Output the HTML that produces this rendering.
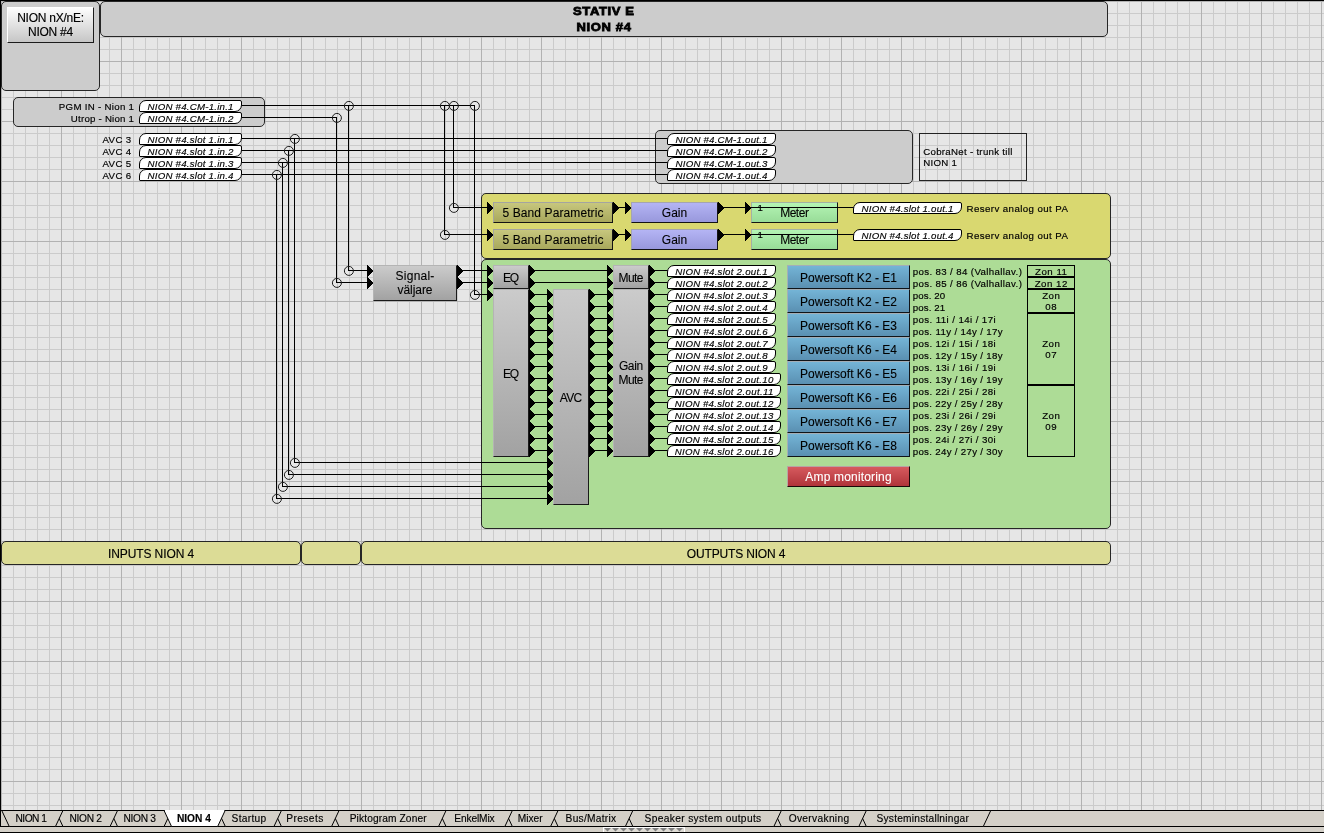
<!DOCTYPE html>
<html><head><meta charset="utf-8"><title>NION 4</title>
<style>
html,body{margin:0;padding:0;}
body{width:1324px;height:833px;position:relative;overflow:hidden;background:#e6e6e6;font-family:"Liberation Sans",sans-serif;color:#000;}
#grid{position:absolute;left:0;top:0;width:1324px;height:833px;
background-image:
 linear-gradient(to right,#b2b2b2 1px,transparent 1px),
 linear-gradient(to bottom,#b2b2b2 1px,transparent 1px),
 linear-gradient(to right,#cbcbcb 1px,transparent 1px),
 linear-gradient(to bottom,#cbcbcb 1px,transparent 1px);
background-size:60px 60px,60px 60px,12px 12px,12px 12px;
background-position:1px 1px;}
#all{position:absolute;left:0;top:0;width:1324px;height:833px;will-change:transform;}
div{box-sizing:border-box;}
.pan{position:absolute;border:1px solid #262626;border-radius:5px;}
.gray{background:#cccccc;}
.yel{background:#d9d870;}
.grn{background:#addc96;}
.kha{background:#dcdc96;text-align:center;font-size:12px;line-height:22px;white-space:nowrap;padding-top:1px;-webkit-text-stroke:0.15px #000;}
.box{position:absolute;border:1px solid #222;}
.hdr{position:absolute;text-align:center;font-weight:bold;font-size:11.3px;line-height:16.2px;padding-top:1.8px;-webkit-text-stroke:0.8px #000;white-space:nowrap;}
.btn{position:absolute;border:1px solid;border-color:#fff #1c1c1c #1c1c1c #fff;background:linear-gradient(#fdfdfd,#c6c6c6);text-align:center;font-size:12px;line-height:14px;padding-top:2.6px;letter-spacing:-0.25px;-webkit-text-stroke:0.15px #000;}
svg{position:absolute;left:0;top:0;}
svg .cs circle{fill:none;stroke:#1c1c1c;stroke-width:1;}
.blk{position:absolute;border:1px solid;text-align:center;font-size:12px;display:flex;align-items:center;justify-content:center;line-height:14px;white-space:nowrap;-webkit-text-stroke:0.1px;}
.gry{background:linear-gradient(#cbcbcb,#a2a2a2);border-color:#b4b4b4 #1a1a1a #1a1a1a #b4b4b4;}
.olv{background:linear-gradient(#c7c77e,#a8a85c);border-color:#a4a4a0 #141414 #141414 #a4a4a0;}
.lav{background:linear-gradient(#b4b4f4,#9898dc);border-color:#a4a4b0 #141414 #141414 #a4a4b0;}
.mtr{background:linear-gradient(#b4f4b4,#98dc98);border-color:#a4b0a4 #141414 #141414 #a4b0a4;}
.pws{background:linear-gradient(#74b4d6,#5a90b2);border-color:#a4aeb6 #101418 #101418 #a4aeb6;}
.red{background:linear-gradient(#d65a5e,#b0343a);border-color:#b8a4a4 #180808 #180808 #b8a4a4;color:#fff;}
.pill{position:absolute;background:#fff;border:1px solid #000;border-radius:7px 2px 7px 1px;font-style:italic;font-size:9.7px;line-height:11.3px;white-space:nowrap;text-align:center;-webkit-text-stroke:0.15px #000;}
.t{position:absolute;white-space:nowrap;}
.lb{font-size:9.7px;line-height:12px;-webkit-text-stroke:0.17px #000;}
.zon{position:absolute;border:1px solid #000;text-align:center;font-size:9.7px;line-height:11px;display:flex;align-items:center;justify-content:center;-webkit-text-stroke:0.17px #000;}
#tabbar{position:absolute;left:0;top:810px;width:1324px;height:23px;background:#d4d0c8;}
.tab{position:absolute;top:811px;height:15px;font-size:10.2px;line-height:15px;white-space:nowrap;-webkit-text-stroke:0.15px #000;}
.act{font-weight:bold;}
</style></head><body>
<div id="all">
<div id="grid"></div>
<div class="pan gray" style="left:1px;top:1px;width:99px;height:90px;"></div>
<div class="pan gray" style="left:100px;top:1px;width:1008px;height:36px;"></div>
<div class="pan gray" style="left:13px;top:97px;width:252px;height:30px;"></div>
<div class="pan gray" style="left:655px;top:130px;width:258px;height:54px;"></div>
<div class="box" style="left:919px;top:133px;width:108px;height:48px;"></div>
<div class="pan yel" style="left:481px;top:193px;width:630px;height:66px;"></div>
<div class="pan grn" style="left:481px;top:259px;width:630px;height:270px;"></div>
<div class="pan kha" style="left:1px;top:541px;width:300px;height:24px;"><span style="letter-spacing:-0.104px">INPUTS NION 4</span></div>
<div class="pan kha" style="left:301px;top:541px;width:60px;height:24px;"></div>
<div class="pan kha" style="left:361px;top:541px;width:750px;height:24px;"><span style="letter-spacing:-0.167px">OUTPUTS NION 4</span></div>
<svg width="1324" height="833" viewBox="0 0 1324 833" shape-rendering="crispEdges">
<rect x="242" y="105" width="233" height="1" fill="#000"/>
<rect x="242" y="117" width="95" height="1" fill="#000"/>
<rect x="242" y="138" width="426" height="1" fill="#000"/>
<rect x="294" y="138" width="1" height="325" fill="#000"/>
<rect x="294" y="462" width="254" height="1" fill="#000"/>
<polygon points="547,457 553,463 547,469"/>
<rect x="242" y="150" width="426" height="1" fill="#000"/>
<rect x="288" y="150" width="1" height="325" fill="#000"/>
<rect x="288" y="474" width="260" height="1" fill="#000"/>
<polygon points="547,469 553,475 547,481"/>
<rect x="242" y="162" width="426" height="1" fill="#000"/>
<rect x="282" y="162" width="1" height="325" fill="#000"/>
<rect x="282" y="486" width="266" height="1" fill="#000"/>
<polygon points="547,481 553,487 547,493"/>
<rect x="242" y="174" width="426" height="1" fill="#000"/>
<rect x="276" y="174" width="1" height="325" fill="#000"/>
<rect x="276" y="498" width="272" height="1" fill="#000"/>
<polygon points="547,493 553,499 547,505"/>
<rect x="348" y="105" width="1" height="166" fill="#000"/>
<rect x="348" y="270" width="20" height="1" fill="#000"/>
<rect x="336" y="117" width="1" height="166" fill="#000"/>
<rect x="336" y="282" width="32" height="1" fill="#000"/>
<rect x="444" y="105" width="1" height="130" fill="#000"/>
<rect x="444" y="234" width="44" height="1" fill="#000"/>
<rect x="453" y="105" width="1" height="103" fill="#000"/>
<rect x="453" y="207" width="35" height="1" fill="#000"/>
<rect x="474" y="105" width="1" height="190" fill="#000"/>
<rect x="474" y="294" width="14" height="1" fill="#000"/>
<polygon points="367,265 373,271 367,277"/>
<polygon points="457,265 463,271 457,277"/>
<rect x="463" y="270" width="25" height="1" fill="#000"/>
<polygon points="367,277 373,283 367,289"/>
<polygon points="457,277 463,283 457,289"/>
<rect x="463" y="282" width="25" height="1" fill="#000"/>
<polygon points="487,202 493,208 487,214"/>
<polygon points="613,202 619,208 613,214"/>
<rect x="619" y="207" width="7" height="1" fill="#000"/>
<polygon points="625,202 631,208 625,214"/>
<polygon points="718,202 724,208 718,214"/>
<rect x="724" y="207" width="22" height="1" fill="#000"/>
<polygon points="745,202 751,208 745,214"/>
<rect x="838" y="207" width="16" height="1" fill="#000"/>
<polygon points="487,229 493,235 487,241"/>
<polygon points="613,229 619,235 613,241"/>
<rect x="619" y="234" width="7" height="1" fill="#000"/>
<polygon points="625,229 631,235 625,241"/>
<polygon points="718,229 724,235 718,241"/>
<rect x="724" y="234" width="22" height="1" fill="#000"/>
<polygon points="745,229 751,235 745,241"/>
<rect x="838" y="234" width="16" height="1" fill="#000"/>
<polygon points="487,265 493,271 487,277"/>
<polygon points="487,277 493,283 487,289"/>
<polygon points="487,289 493,295 487,301"/>
<polygon points="529,265 535,271 529,277"/>
<rect x="535" y="270" width="73" height="1" fill="#000"/>
<polygon points="607,265 613,271 607,277"/>
<polygon points="529,277 535,283 529,289"/>
<rect x="535" y="282" width="73" height="1" fill="#000"/>
<polygon points="607,277 613,283 607,289"/>
<polygon points="529,289 535,295 529,301"/>
<rect x="535" y="294" width="13" height="1" fill="#000"/>
<polygon points="547,289 553,295 547,301"/>
<polygon points="589,289 595,295 589,301"/>
<rect x="595" y="294" width="13" height="1" fill="#000"/>
<polygon points="607,289 613,295 607,301"/>
<polygon points="529,301 535,307 529,313"/>
<rect x="535" y="306" width="13" height="1" fill="#000"/>
<polygon points="547,301 553,307 547,313"/>
<polygon points="589,301 595,307 589,313"/>
<rect x="595" y="306" width="13" height="1" fill="#000"/>
<polygon points="607,301 613,307 607,313"/>
<polygon points="529,313 535,319 529,325"/>
<rect x="535" y="318" width="13" height="1" fill="#000"/>
<polygon points="547,313 553,319 547,325"/>
<polygon points="589,313 595,319 589,325"/>
<rect x="595" y="318" width="13" height="1" fill="#000"/>
<polygon points="607,313 613,319 607,325"/>
<polygon points="529,325 535,331 529,337"/>
<rect x="535" y="330" width="13" height="1" fill="#000"/>
<polygon points="547,325 553,331 547,337"/>
<polygon points="589,325 595,331 589,337"/>
<rect x="595" y="330" width="13" height="1" fill="#000"/>
<polygon points="607,325 613,331 607,337"/>
<polygon points="529,337 535,343 529,349"/>
<rect x="535" y="342" width="13" height="1" fill="#000"/>
<polygon points="547,337 553,343 547,349"/>
<polygon points="589,337 595,343 589,349"/>
<rect x="595" y="342" width="13" height="1" fill="#000"/>
<polygon points="607,337 613,343 607,349"/>
<polygon points="529,349 535,355 529,361"/>
<rect x="535" y="354" width="13" height="1" fill="#000"/>
<polygon points="547,349 553,355 547,361"/>
<polygon points="589,349 595,355 589,361"/>
<rect x="595" y="354" width="13" height="1" fill="#000"/>
<polygon points="607,349 613,355 607,361"/>
<polygon points="529,361 535,367 529,373"/>
<rect x="535" y="366" width="13" height="1" fill="#000"/>
<polygon points="547,361 553,367 547,373"/>
<polygon points="589,361 595,367 589,373"/>
<rect x="595" y="366" width="13" height="1" fill="#000"/>
<polygon points="607,361 613,367 607,373"/>
<polygon points="529,373 535,379 529,385"/>
<rect x="535" y="378" width="13" height="1" fill="#000"/>
<polygon points="547,373 553,379 547,385"/>
<polygon points="589,373 595,379 589,385"/>
<rect x="595" y="378" width="13" height="1" fill="#000"/>
<polygon points="607,373 613,379 607,385"/>
<polygon points="529,385 535,391 529,397"/>
<rect x="535" y="390" width="13" height="1" fill="#000"/>
<polygon points="547,385 553,391 547,397"/>
<polygon points="589,385 595,391 589,397"/>
<rect x="595" y="390" width="13" height="1" fill="#000"/>
<polygon points="607,385 613,391 607,397"/>
<polygon points="529,397 535,403 529,409"/>
<rect x="535" y="402" width="13" height="1" fill="#000"/>
<polygon points="547,397 553,403 547,409"/>
<polygon points="589,397 595,403 589,409"/>
<rect x="595" y="402" width="13" height="1" fill="#000"/>
<polygon points="607,397 613,403 607,409"/>
<polygon points="529,409 535,415 529,421"/>
<rect x="535" y="414" width="13" height="1" fill="#000"/>
<polygon points="547,409 553,415 547,421"/>
<polygon points="589,409 595,415 589,421"/>
<rect x="595" y="414" width="13" height="1" fill="#000"/>
<polygon points="607,409 613,415 607,421"/>
<polygon points="529,421 535,427 529,433"/>
<rect x="535" y="426" width="13" height="1" fill="#000"/>
<polygon points="547,421 553,427 547,433"/>
<polygon points="589,421 595,427 589,433"/>
<rect x="595" y="426" width="13" height="1" fill="#000"/>
<polygon points="607,421 613,427 607,433"/>
<polygon points="529,433 535,439 529,445"/>
<rect x="535" y="438" width="13" height="1" fill="#000"/>
<polygon points="547,433 553,439 547,445"/>
<polygon points="589,433 595,439 589,445"/>
<rect x="595" y="438" width="13" height="1" fill="#000"/>
<polygon points="607,433 613,439 607,445"/>
<polygon points="529,445 535,451 529,457"/>
<rect x="535" y="450" width="13" height="1" fill="#000"/>
<polygon points="547,445 553,451 547,457"/>
<polygon points="589,445 595,451 589,457"/>
<rect x="595" y="450" width="13" height="1" fill="#000"/>
<polygon points="607,445 613,451 607,457"/>
<polygon points="649,265 655,271 649,277"/>
<rect x="655" y="270" width="13" height="1" fill="#000"/>
<polygon points="649,277 655,283 649,289"/>
<rect x="655" y="282" width="13" height="1" fill="#000"/>
<polygon points="649,289 655,295 649,301"/>
<rect x="655" y="294" width="13" height="1" fill="#000"/>
<polygon points="649,301 655,307 649,313"/>
<rect x="655" y="306" width="13" height="1" fill="#000"/>
<polygon points="649,313 655,319 649,325"/>
<rect x="655" y="318" width="13" height="1" fill="#000"/>
<polygon points="649,325 655,331 649,337"/>
<rect x="655" y="330" width="13" height="1" fill="#000"/>
<polygon points="649,337 655,343 649,349"/>
<rect x="655" y="342" width="13" height="1" fill="#000"/>
<polygon points="649,349 655,355 649,361"/>
<rect x="655" y="354" width="13" height="1" fill="#000"/>
<polygon points="649,361 655,367 649,373"/>
<rect x="655" y="366" width="13" height="1" fill="#000"/>
<polygon points="649,373 655,379 649,385"/>
<rect x="655" y="378" width="13" height="1" fill="#000"/>
<polygon points="649,385 655,391 649,397"/>
<rect x="655" y="390" width="13" height="1" fill="#000"/>
<polygon points="649,397 655,403 649,409"/>
<rect x="655" y="402" width="13" height="1" fill="#000"/>
<polygon points="649,409 655,415 649,421"/>
<rect x="655" y="414" width="13" height="1" fill="#000"/>
<polygon points="649,421 655,427 649,433"/>
<rect x="655" y="426" width="13" height="1" fill="#000"/>
<polygon points="649,433 655,439 649,445"/>
<rect x="655" y="438" width="13" height="1" fill="#000"/>
<polygon points="649,445 655,451 649,457"/>
<rect x="655" y="450" width="13" height="1" fill="#000"/>
<g class="cs" shape-rendering="geometricPrecision">
<circle cx="294.9" cy="138.9" r="4.5"/>
<circle cx="294.9" cy="462.9" r="4.5"/>
<circle cx="288.9" cy="150.9" r="4.5"/>
<circle cx="288.9" cy="474.9" r="4.5"/>
<circle cx="282.9" cy="162.9" r="4.5"/>
<circle cx="282.9" cy="486.9" r="4.5"/>
<circle cx="276.9" cy="174.9" r="4.5"/>
<circle cx="276.9" cy="498.9" r="4.5"/>
<circle cx="348.9" cy="105.9" r="4.5"/>
<circle cx="348.9" cy="270.9" r="4.5"/>
<circle cx="336.9" cy="117.9" r="4.5"/>
<circle cx="336.9" cy="282.9" r="4.5"/>
<circle cx="444.9" cy="105.9" r="4.5"/>
<circle cx="444.9" cy="234.9" r="4.5"/>
<circle cx="453.9" cy="105.9" r="4.5"/>
<circle cx="453.9" cy="207.9" r="4.5"/>
<circle cx="474.9" cy="105.9" r="4.5"/>
<circle cx="474.9" cy="294.9" r="4.5"/>
</g>
</svg>
<div class="hdr" style="left:100px;top:1px;width:1008px;"><span style="display:inline-block;transform:scaleX(1.15);letter-spacing:0.552px;margin-right:-0.552px">STATIV E</span><br><span style="display:inline-block;transform:scaleX(1.15);letter-spacing:0.572px;margin-right:-0.572px">NION #4</span></div>
<div class="btn" style="left:7px;top:7px;width:87px;height:36px;">NION nX/nE:<br>NION #4</div>
<div class="blk olv" style="left:493px;top:202px;width:120px;height:21px;"><div style="position:relative;top:0.3px"><span style="letter-spacing:0.101px;margin-right:-0.101px">5 Band Parametric</span></div></div>
<div class="blk lav" style="left:631px;top:202px;width:87px;height:21px;"><div style="position:relative;top:0.3px"><span style="letter-spacing:-0.016px;margin-right:0.016px">Gain</span></div></div>
<div class="blk mtr" style="left:751px;top:202px;width:87px;height:21px;"><div style="position:relative;top:0.3px"><span style="letter-spacing:-0.481px;margin-right:0.481px">Meter</span></div></div>
<div class="t" style="left:757.5px;top:201.6px;font-size:9.6px;line-height:11px;-webkit-text-stroke:0.2px #000;">1</div>
<div style="position:absolute;left:751px;top:207px;width:88px;height:1px;background:#000"></div>
<div class="blk olv" style="left:493px;top:229px;width:120px;height:21px;"><div style="position:relative;top:0.3px"><span style="letter-spacing:0.101px;margin-right:-0.101px">5 Band Parametric</span></div></div>
<div class="blk lav" style="left:631px;top:229px;width:87px;height:21px;"><div style="position:relative;top:0.3px"><span style="letter-spacing:-0.016px;margin-right:0.016px">Gain</span></div></div>
<div class="blk mtr" style="left:751px;top:229px;width:87px;height:21px;"><div style="position:relative;top:0.3px"><span style="letter-spacing:-0.481px;margin-right:0.481px">Meter</span></div></div>
<div class="t" style="left:757.5px;top:228.6px;font-size:9.6px;line-height:11px;-webkit-text-stroke:0.2px #000;">1</div>
<div style="position:absolute;left:751px;top:234px;width:88px;height:1px;background:#000"></div>
<div class="blk gry" style="left:373px;top:265px;width:84px;height:36px;"><div style="position:relative;top:-0.4px"><span style="letter-spacing:0.233px;margin-right:-0.233px">Signal-</span><br><span style="letter-spacing:-0.058px;margin-right:0.058px">väljare</span></div></div>
<div class="blk gry" style="left:493px;top:265px;width:36px;height:24px;"><div style="position:relative;top:0.6px"><span style="letter-spacing:-1.338px;margin-right:1.338px">EQ</span></div></div>
<div class="blk gry" style="left:493px;top:289px;width:36px;height:168px;"><div style="position:relative;top:0.6px"><span style="letter-spacing:-1.338px;margin-right:1.338px">EQ</span></div></div>
<div class="blk gry" style="left:553px;top:289px;width:36px;height:216px;"><div style="position:relative;top:0.6px"><span style="letter-spacing:-0.642px;margin-right:0.642px">AVC</span></div></div>
<div class="blk gry" style="left:613px;top:265px;width:36px;height:24px;"><div style="position:relative;top:0.6px"><span style="letter-spacing:-0.559px;margin-right:0.559px">Mute</span></div></div>
<div class="blk gry" style="left:613px;top:289px;width:36px;height:168px;"><div style="position:relative;top:-0.4px"><span style="letter-spacing:-0.366px;margin-right:0.366px">Gain</span><br><span style="letter-spacing:-0.559px;margin-right:0.559px">Mute</span></div></div>
<div class="blk pws" style="left:787px;top:265px;width:123px;height:24px;"><div style="position:relative;top:0.6px"><span style="letter-spacing:0.018px;margin-right:-0.018px">Powersoft K2 - E1</span></div></div>
<div class="blk pws" style="left:787px;top:289px;width:123px;height:24px;"><div style="position:relative;top:0.6px"><span style="letter-spacing:0.018px;margin-right:-0.018px">Powersoft K2 - E2</span></div></div>
<div class="blk pws" style="left:787px;top:313px;width:123px;height:24px;"><div style="position:relative;top:0.6px"><span style="letter-spacing:0.018px;margin-right:-0.018px">Powersoft K6 - E3</span></div></div>
<div class="blk pws" style="left:787px;top:337px;width:123px;height:24px;"><div style="position:relative;top:0.6px"><span style="letter-spacing:0.018px;margin-right:-0.018px">Powersoft K6 - E4</span></div></div>
<div class="blk pws" style="left:787px;top:361px;width:123px;height:24px;"><div style="position:relative;top:0.6px"><span style="letter-spacing:0.018px;margin-right:-0.018px">Powersoft K6 - E5</span></div></div>
<div class="blk pws" style="left:787px;top:385px;width:123px;height:24px;"><div style="position:relative;top:0.6px"><span style="letter-spacing:0.018px;margin-right:-0.018px">Powersoft K6 - E6</span></div></div>
<div class="blk pws" style="left:787px;top:409px;width:123px;height:24px;"><div style="position:relative;top:0.6px"><span style="letter-spacing:0.018px;margin-right:-0.018px">Powersoft K6 - E7</span></div></div>
<div class="blk pws" style="left:787px;top:433px;width:123px;height:24px;"><div style="position:relative;top:0.6px"><span style="letter-spacing:0.018px;margin-right:-0.018px">Powersoft K6 - E8</span></div></div>
<div class="blk red" style="left:787px;top:466px;width:123px;height:21px;"><div style="position:relative;top:0.3px"><span style="letter-spacing:0.17px;margin-right:-0.17px">Amp monitoring</span></div></div>
<div class="pill" style="left:139px;top:100px;width:103px;height:12px;"><span style="letter-spacing:0.22px;margin-right:-0.22px">NION #4.CM-1.in.1</span></div>
<div class="pill" style="left:139px;top:112px;width:103px;height:12px;"><span style="letter-spacing:0.22px;margin-right:-0.22px">NION #4.CM-1.in.2</span></div>
<div class="pill" style="left:139px;top:133px;width:103px;height:12px;"><span style="letter-spacing:0.225px;margin-right:-0.225px">NION #4.slot 1.in.1</span></div>
<div class="pill" style="left:667px;top:133px;width:109px;height:12px;"><span style="letter-spacing:0.211px;margin-right:-0.211px">NION #4.CM-1.out.1</span></div>
<div class="pill" style="left:139px;top:145px;width:103px;height:12px;"><span style="letter-spacing:0.225px;margin-right:-0.225px">NION #4.slot 1.in.2</span></div>
<div class="pill" style="left:667px;top:145px;width:109px;height:12px;"><span style="letter-spacing:0.211px;margin-right:-0.211px">NION #4.CM-1.out.2</span></div>
<div class="pill" style="left:139px;top:157px;width:103px;height:12px;"><span style="letter-spacing:0.225px;margin-right:-0.225px">NION #4.slot 1.in.3</span></div>
<div class="pill" style="left:667px;top:157px;width:109px;height:12px;"><span style="letter-spacing:0.211px;margin-right:-0.211px">NION #4.CM-1.out.3</span></div>
<div class="pill" style="left:139px;top:169px;width:103px;height:12px;"><span style="letter-spacing:0.225px;margin-right:-0.225px">NION #4.slot 1.in.4</span></div>
<div class="pill" style="left:667px;top:169px;width:109px;height:12px;"><span style="letter-spacing:0.211px;margin-right:-0.211px">NION #4.CM-1.out.4</span></div>
<div class="pill" style="left:853px;top:202px;width:109px;height:12px;"><span style="letter-spacing:0.217px;margin-right:-0.217px">NION #4.slot 1.out.1</span></div>
<div class="pill" style="left:853px;top:229px;width:109px;height:12px;"><span style="letter-spacing:0.217px;margin-right:-0.217px">NION #4.slot 1.out.4</span></div>
<div class="pill" style="left:667px;top:265px;width:109px;height:12px;"><span style="letter-spacing:0.243px;margin-right:-0.243px">NION #4.slot 2.out.1</span></div>
<div class="pill" style="left:667px;top:277px;width:109px;height:12px;"><span style="letter-spacing:0.243px;margin-right:-0.243px">NION #4.slot 2.out.2</span></div>
<div class="pill" style="left:667px;top:289px;width:109px;height:12px;"><span style="letter-spacing:0.243px;margin-right:-0.243px">NION #4.slot 2.out.3</span></div>
<div class="pill" style="left:667px;top:301px;width:109px;height:12px;"><span style="letter-spacing:0.243px;margin-right:-0.243px">NION #4.slot 2.out.4</span></div>
<div class="pill" style="left:667px;top:313px;width:109px;height:12px;"><span style="letter-spacing:0.243px;margin-right:-0.243px">NION #4.slot 2.out.5</span></div>
<div class="pill" style="left:667px;top:325px;width:109px;height:12px;"><span style="letter-spacing:0.243px;margin-right:-0.243px">NION #4.slot 2.out.6</span></div>
<div class="pill" style="left:667px;top:337px;width:109px;height:12px;"><span style="letter-spacing:0.243px;margin-right:-0.243px">NION #4.slot 2.out.7</span></div>
<div class="pill" style="left:667px;top:349px;width:109px;height:12px;"><span style="letter-spacing:0.243px;margin-right:-0.243px">NION #4.slot 2.out.8</span></div>
<div class="pill" style="left:667px;top:361px;width:109px;height:12px;"><span style="letter-spacing:0.243px;margin-right:-0.243px">NION #4.slot 2.out.9</span></div>
<div class="pill" style="left:667px;top:373px;width:114px;height:12px;"><span style="letter-spacing:0.274px;margin-right:-0.274px">NION #4.slot 2.out.10</span></div>
<div class="pill" style="left:667px;top:385px;width:114px;height:12px;"><span style="letter-spacing:0.31px;margin-right:-0.31px">NION #4.slot 2.out.11</span></div>
<div class="pill" style="left:667px;top:397px;width:114px;height:12px;"><span style="letter-spacing:0.274px;margin-right:-0.274px">NION #4.slot 2.out.12</span></div>
<div class="pill" style="left:667px;top:409px;width:114px;height:12px;"><span style="letter-spacing:0.274px;margin-right:-0.274px">NION #4.slot 2.out.13</span></div>
<div class="pill" style="left:667px;top:421px;width:114px;height:12px;"><span style="letter-spacing:0.274px;margin-right:-0.274px">NION #4.slot 2.out.14</span></div>
<div class="pill" style="left:667px;top:433px;width:114px;height:12px;"><span style="letter-spacing:0.274px;margin-right:-0.274px">NION #4.slot 2.out.15</span></div>
<div class="pill" style="left:667px;top:445px;width:114px;height:12px;"><span style="letter-spacing:0.274px;margin-right:-0.274px">NION #4.slot 2.out.16</span></div>
<div class="t lb" style="right:1190px;top:100.5px;letter-spacing:0.293px;margin-right:-0.293px">PGM IN - Nion 1</div>
<div class="t lb" style="right:1190px;top:112.5px;letter-spacing:0.221px;margin-right:-0.221px">Utrop - Nion 1</div>
<div class="t lb" style="left:102.5px;top:133.5px;letter-spacing:0.359px;">AVC 3</div>
<div class="t lb" style="left:102.5px;top:145.5px;letter-spacing:0.359px;">AVC 4</div>
<div class="t lb" style="left:102.5px;top:157.5px;letter-spacing:0.359px;">AVC 5</div>
<div class="t lb" style="left:102.5px;top:169.5px;letter-spacing:0.359px;">AVC 6</div>
<div class="t lb" style="left:966.5px;top:202.5px;letter-spacing:0.414px;">Reserv analog out PA</div>
<div class="t lb" style="left:966.5px;top:229.5px;letter-spacing:0.414px;">Reserv analog out PA</div>
<div class="t lb" style="left:923.2px;top:145.5px;letter-spacing:0.285px;line-height:11px;">CobraNet - trunk till<br>NION 1</div>
<div class="t lb" style="left:912.7px;top:265.5px;letter-spacing:0.368px;">pos. 83 / 84 (Valhallav.)</div>
<div class="t lb" style="left:912.7px;top:277.5px;letter-spacing:0.368px;">pos. 85 / 86 (Valhallav.)</div>
<div class="t lb" style="left:912.7px;top:289.5px;letter-spacing:0.114px;">pos. 20</div>
<div class="t lb" style="left:912.7px;top:301.5px;letter-spacing:0.114px;">pos. 21</div>
<div class="t lb" style="left:912.7px;top:313.5px;letter-spacing:0.405px;">pos. 11i / 14i / 17i</div>
<div class="t lb" style="left:912.7px;top:325.5px;letter-spacing:0.348px;">pos. 11y / 14y / 17y</div>
<div class="t lb" style="left:912.7px;top:337.5px;letter-spacing:0.367px;">pos. 12i / 15i / 18i</div>
<div class="t lb" style="left:912.7px;top:349.5px;letter-spacing:0.31px;">pos. 12y / 15y / 18y</div>
<div class="t lb" style="left:912.7px;top:361.5px;letter-spacing:0.367px;">pos. 13i / 16i / 19i</div>
<div class="t lb" style="left:912.7px;top:373.5px;letter-spacing:0.31px;">pos. 13y / 16y / 19y</div>
<div class="t lb" style="left:912.7px;top:385.5px;letter-spacing:0.367px;">pos. 22i / 25i / 28i</div>
<div class="t lb" style="left:912.7px;top:397.5px;letter-spacing:0.31px;">pos. 22y / 25y / 28y</div>
<div class="t lb" style="left:912.7px;top:409.5px;letter-spacing:0.367px;">pos. 23i / 26i / 29i</div>
<div class="t lb" style="left:912.7px;top:421.5px;letter-spacing:0.31px;">pos. 23y / 26y / 29y</div>
<div class="t lb" style="left:912.7px;top:433.5px;letter-spacing:0.367px;">pos. 24i / 27i / 30i</div>
<div class="t lb" style="left:912.7px;top:445.5px;letter-spacing:0.31px;">pos. 24y / 27y / 30y</div>
<div class="zon" style="left:1027px;top:265px;width:48px;height:12px;padding-top:1px;"><span style="letter-spacing:0.504px;margin-right:-0.504px">Zon 11</span></div>
<div class="zon" style="left:1027px;top:277px;width:48px;height:12px;padding-top:1px;"><span style="letter-spacing:0.504px;margin-right:-0.504px">Zon 12</span></div>
<div class="zon" style="left:1027px;top:289px;width:48px;height:24px;"><span style="letter-spacing:0.504px;margin-right:-0.504px">Zon<br>08</span></div>
<div class="zon" style="left:1027px;top:313px;width:48px;height:72px;"><span style="letter-spacing:0.504px;margin-right:-0.504px">Zon<br>07</span></div>
<div class="zon" style="left:1027px;top:385px;width:48px;height:72px;"><span style="letter-spacing:0.504px;margin-right:-0.504px">Zon<br>09</span></div>
<div id="tabbar"></div>
<svg width="1324" height="833" viewBox="0 0 1324 833">
<rect x="0" y="810" width="1324" height="1" fill="#000" shape-rendering="crispEdges"/>
<rect x="0" y="826" width="1324" height="1" fill="#000" shape-rendering="crispEdges"/>
<polygon points="858.85,810.5 866.35,826.5 983.25,826.5 990.75,810.5" fill="#d4d0c8" stroke="#000" stroke-width="1"/>
<polygon points="773.85,810.5 781.35,826.5 858.85,826.5 866.35,810.5" fill="#d4d0c8" stroke="#000" stroke-width="1"/>
<polygon points="625.35,810.5 632.85,826.5 773.85,826.5 781.35,810.5" fill="#d4d0c8" stroke="#000" stroke-width="1"/>
<polygon points="550.55,810.5 558.05,826.5 625.35,826.5 632.85,810.5" fill="#d4d0c8" stroke="#000" stroke-width="1"/>
<polygon points="504.85,810.5 512.35,826.5 550.55,826.5 558.05,810.5" fill="#d4d0c8" stroke="#000" stroke-width="1"/>
<polygon points="438.55,810.5 446.05,826.5 504.85,826.5 512.35,810.5" fill="#d4d0c8" stroke="#000" stroke-width="1"/>
<polygon points="331.55,810.5 339.05,826.5 438.55,826.5 446.05,810.5" fill="#d4d0c8" stroke="#000" stroke-width="1"/>
<polygon points="273.95,810.5 281.45,826.5 331.55,826.5 339.05,810.5" fill="#d4d0c8" stroke="#000" stroke-width="1"/>
<polygon points="217.85,810.5 225.35,826.5 273.95,826.5 281.45,810.5" fill="#d4d0c8" stroke="#000" stroke-width="1"/>
<polygon points="110.05,810.5 117.55,826.5 164.05,826.5 171.55,810.5" fill="#d4d0c8" stroke="#000" stroke-width="1"/>
<polygon points="55.45,810.5 62.95,826.5 110.05,826.5 117.55,810.5" fill="#d4d0c8" stroke="#000" stroke-width="1"/>
<polygon points="1.75,810.5 9.25,826.5 55.45,826.5 62.95,810.5" fill="#d4d0c8" stroke="#000" stroke-width="1"/>
<polygon points="164.05,810.5 171.55,826.5 217.65,826.5 225.15,810.5" fill="#fff" stroke="#000" stroke-width="1"/>
<rect x="164.85" y="810" width="59.50" height="1" fill="#fff"/>
<g shape-rendering="crispEdges"><rect x="603" y="827" width="82" height="5" fill="#dedbd4"/>
<rect x="603" y="827" width="82" height="1" fill="#fff"/><rect x="603" y="827" width="1" height="5" fill="#fff"/><rect x="684" y="827" width="1" height="5" fill="#fff"/></g>
<polygon points="604,828 611,828 607.5,831.5" fill="#808080"/><polygon points="612,828 619,828 615.5,831.5" fill="#808080"/><polygon points="620,828 627,828 623.5,831.5" fill="#808080"/><polygon points="628,828 635,828 631.5,831.5" fill="#808080"/><polygon points="636,828 643,828 639.5,831.5" fill="#808080"/><polygon points="644,828 651,828 647.5,831.5" fill="#808080"/><polygon points="652,828 659,828 655.5,831.5" fill="#808080"/><polygon points="660,828 667,828 663.5,831.5" fill="#808080"/><polygon points="668,828 675,828 671.5,831.5" fill="#808080"/><polygon points="676,828 683,828 679.5,831.5" fill="#808080"/>
<rect x="0" y="832" width="1324" height="1" fill="#000" shape-rendering="crispEdges"/>
<rect x="0" y="0" width="1324" height="1" fill="#000" shape-rendering="crispEdges"/>
<rect x="0" y="0" width="1" height="827" fill="#000" shape-rendering="crispEdges"/>
</svg>
<div class="tab" style="left:15.5px;letter-spacing:-0.501px;">NION 1</div>
<div class="tab" style="left:69.5px;letter-spacing:-0.301px;">NION 2</div>
<div class="tab" style="left:123.5px;letter-spacing:-0.301px;">NION 3</div>
<div class="tab act" style="left:176.9px;letter-spacing:0.019px;">NION 4</div>
<div class="tab" style="left:231.6px;letter-spacing:0.286px;">Startup</div>
<div class="tab" style="left:286.3px;letter-spacing:0.403px;">Presets</div>
<div class="tab" style="left:349.7px;letter-spacing:0.115px;">Piktogram Zoner</div>
<div class="tab" style="left:454.3px;letter-spacing:-0.14px;">EnkelMix</div>
<div class="tab" style="left:517.8px;letter-spacing:-0.008px;">Mixer</div>
<div class="tab" style="left:565.6px;letter-spacing:0.269px;">Bus/Matrix</div>
<div class="tab" style="left:644.6px;letter-spacing:0.347px;">Speaker system outputs</div>
<div class="tab" style="left:788.7px;letter-spacing:0.324px;">Overvakning</div>
<div class="tab" style="left:876.5px;letter-spacing:0.22px;">Systeminstallningar</div>
</div>
</body></html>
